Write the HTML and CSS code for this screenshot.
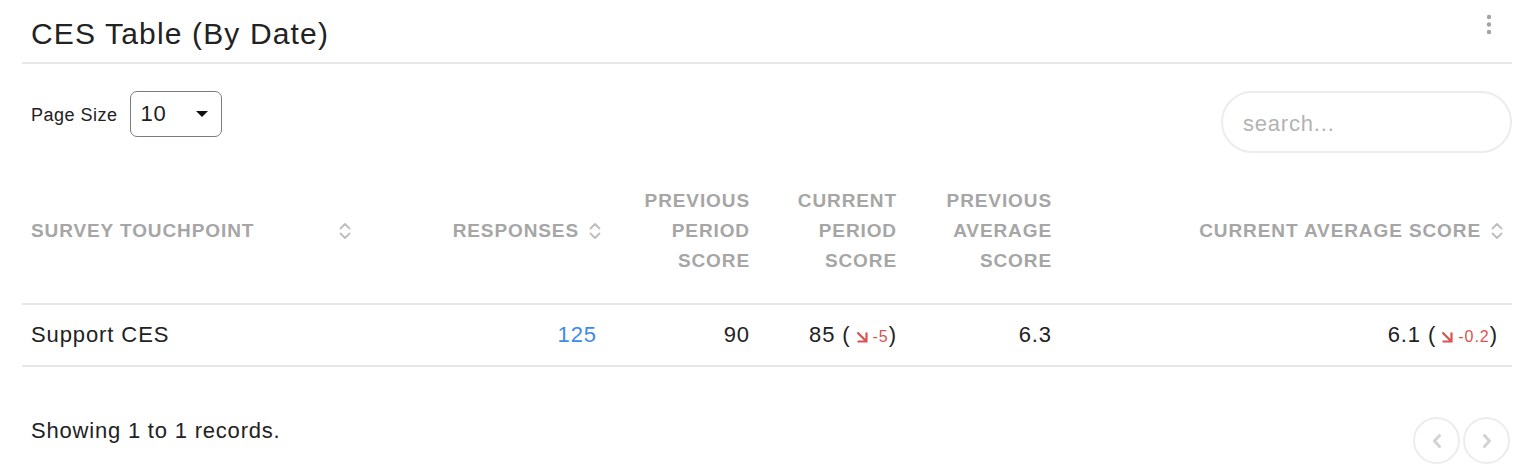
FILE: index.html
```html
<!DOCTYPE html>
<html lang="en">
<head>
<meta charset="utf-8">
<title>CES Table (By Date)</title>
<link rel="stylesheet" href="styles.css">
</head>
<body>
<div class="card">
  <div class="card-head">
    <h1 class="title">CES Table (By Date)</h1>
    <button class="kebab" aria-label="More">
      <svg width="8" height="24" viewBox="0 0 8 24"><circle cx="4" cy="5" r="2.2"/><circle cx="4" cy="12.5" r="2.2"/><circle cx="4" cy="20" r="2.2"/></svg>
    </button>
  </div>

  <div class="controls">
    <div class="page-size">
      <span class="page-size-label">Page Size</span>
      <div class="select">
        <span>10</span>
        <svg class="caret" width="12" height="6" viewBox="0 0 12 6"><path d="M0 0 L12 0 L6 6 Z"/></svg>
      </div>
    </div>
    <input class="search" type="text" placeholder="search...">
  </div>

  <table class="grid">
    <colgroup>
      <col class="w1"><col class="w2"><col class="w3"><col class="w4"><col class="w5"><col class="w6">
    </colgroup>
    <thead>
      <tr>
        <th class="left"><div class="th-between"><span>Survey Touchpoint</span><svg class="sort" width="12" height="20" viewBox="0 0 12 20"><polyline points="1.5,7.5 6,3 10.5,7.5"/><polyline points="1.5,12.5 6,17 10.5,12.5"/></svg></div></th>
        <th><div class="th-right"><span>Responses</span><svg class="sort" width="12" height="20" viewBox="0 0 12 20"><polyline points="1.5,7.5 6,3 10.5,7.5"/><polyline points="1.5,12.5 6,17 10.5,12.5"/></svg></div></th>
        <th>Previous Period Score</th>
        <th>Current Period Score</th>
        <th>Previous Average Score</th>
        <th><div class="th-right"><span>Current Average Score</span><svg class="sort" width="12" height="20" viewBox="0 0 12 20"><polyline points="1.5,7.5 6,3 10.5,7.5"/><polyline points="1.5,12.5 6,17 10.5,12.5"/></svg></div></th>
      </tr>
    </thead>
    <tbody>
      <tr>
        <td class="left">Support CES</td>
        <td class="num link pad-sort">125</td>
        <td class="num">90</td>
        <td class="num">85 (<span class="delta"><svg class="down" width="12" height="12" viewBox="0 0 12 12"><path d="M1.5 1.5 L10 10 M1.5 10.5 L10.5 10.5 L10.5 1.5"/></svg>-5</span>)</td>
        <td class="num">6.3</td>
        <td class="num pad-sort6">6.1 (<span class="delta"><svg class="down" width="12" height="12" viewBox="0 0 12 12"><path d="M1.5 1.5 L10 10 M1.5 10.5 L10.5 10.5 L10.5 1.5"/></svg>-0.2</span>)</td>
      </tr>
    </tbody>
  </table>

  <div class="footer">
    <span class="records">Showing 1 to 1 records.</span>
    <div class="pager">
      <button class="page-btn" aria-label="Previous"><svg width="10" height="14" viewBox="0 0 10 14"><polyline points="7.5,1.5 2.5,7 7.5,12.5"/></svg></button>
      <button class="page-btn" aria-label="Next"><svg width="10" height="14" viewBox="0 0 10 14"><polyline points="2.5,1.5 7.5,7 2.5,12.5"/></svg></button>
    </div>
  </div>
</div>
</body>
</html>
```

FILE: styles.css
```css
* { box-sizing: border-box; }

body {
  margin: 0;
  background: #ffffff;
  font-family: "Liberation Sans", Arial, Helvetica, sans-serif;
  color: #222222;
}

.card {
  padding: 0 22px;
}

.card-head {
  display: flex;
  align-items: flex-start;
  justify-content: space-between;
  padding: 16px 9px 10px;
  border-bottom: 2px solid #e8e8e8;
}

.title {
  margin: 0;
  font-size: 30px;
  font-weight: 400;
  line-height: 36px;
  letter-spacing: 1.15px;
  color: #222222;
}

.kebab {
  margin: -4px 10px 0 0;
  padding: 0;
  border: 0;
  background: none;
  display: flex;
}
.kebab svg { fill: #a3a3a3; }

.controls {
  margin-top: 27px;
  padding-left: 9px;
  display: flex;
  justify-content: space-between;
  align-items: flex-start;
}

.page-size {
  display: flex;
  align-items: center;
  gap: 12px;
  height: 46px;
}

.page-size-label {
  font-size: 18px;
  letter-spacing: 0.5px;
  color: #222;
  padding-top: 3px;
}

.select {
  width: 92px;
  height: 46px;
  border: 1.5px solid #7c7c7c;
  border-radius: 7px;
  padding: 0 13px 0 10px;
  display: flex;
  align-items: center;
  justify-content: space-between;
  font-size: 22px;
  letter-spacing: 0.6px;
  color: #1e1e1e;
}
.caret { fill: #111; }

.search {
  width: 291px;
  height: 62px;
  border: 2px solid #ececec;
  border-radius: 31px;
  padding: 4px 20px 0;
  font-family: "Liberation Sans", Arial, sans-serif;
  font-size: 22px;
  letter-spacing: 0.8px;
  color: #222;
  outline: none;
  background: #fff;
}
.search::placeholder { color: #b3b3b3; }

.grid {
  margin-top: 23px;
  width: 100%;
  border-collapse: collapse;
  table-layout: fixed;
}

.w1 { width: 338px; }
.w2 { width: 250px; }
.w3 { width: 149px; }
.w4 { width: 147px; }
.w5 { width: 155px; }
.w6 { width: 451px; }

.grid th {
  padding: 10px 9px 27px;
  font-size: 19px;
  font-weight: 700;
  line-height: 30px;
  letter-spacing: 0.9px;
  text-transform: uppercase;
  color: #a6a6a6;
  text-align: right;
  vertical-align: middle;
  border-bottom: 2px solid #e6e6e6;
}
.grid th.left { text-align: left; }

.th-between {
  display: flex;
  align-items: center;
  justify-content: space-between;
}
.th-right {
  display: flex;
  align-items: center;
  justify-content: flex-end;
  gap: 10px;
}

.sort {
  fill: none;
  stroke: #bdbdbd;
  stroke-width: 1.8;
  stroke-linecap: round;
  stroke-linejoin: round;
  flex: none;
}

.grid td {
  height: 62px;
  padding: 0 9px;
  font-size: 22px;
  letter-spacing: 0.9px;
  color: #222;
  vertical-align: middle;
  border-bottom: 2px solid #e6e6e6;
  white-space: nowrap;
}
.grid td.num { text-align: right; }
.grid td.left { text-align: left; }
.grid td.link { color: #3d8be8; }
.grid td.pad-sort { padding-right: 13px; }
.grid td.pad-sort6 { padding-right: 14px; }

.delta {
  color: #d9534f;
  font-size: 16px;
  letter-spacing: 1px;
  margin-left: 5px;
}
.down {
  fill: none;
  stroke: #d9534f;
  stroke-width: 2.2;
  margin-right: 5px;
  vertical-align: -1px;
}

.footer {
  margin-top: 52px;
  padding: 0 2px 0 9px;
  display: flex;
  justify-content: space-between;
  align-items: flex-start;
}

.records {
  font-size: 22px;
  line-height: 24px;
  letter-spacing: 0.8px;
  color: #222;
}

.pager {
  display: flex;
  gap: 3px;
  margin-top: -2px;
}

.page-btn {
  width: 47px;
  height: 47px;
  border: 2px solid #ececec;
  border-radius: 50%;
  background: #fff;
  padding: 0;
  display: flex;
  align-items: center;
  justify-content: center;
}
.page-btn svg {
  fill: none;
  stroke: #d3d3d3;
  stroke-width: 3;
  stroke-linecap: round;
  stroke-linejoin: round;
}
```
